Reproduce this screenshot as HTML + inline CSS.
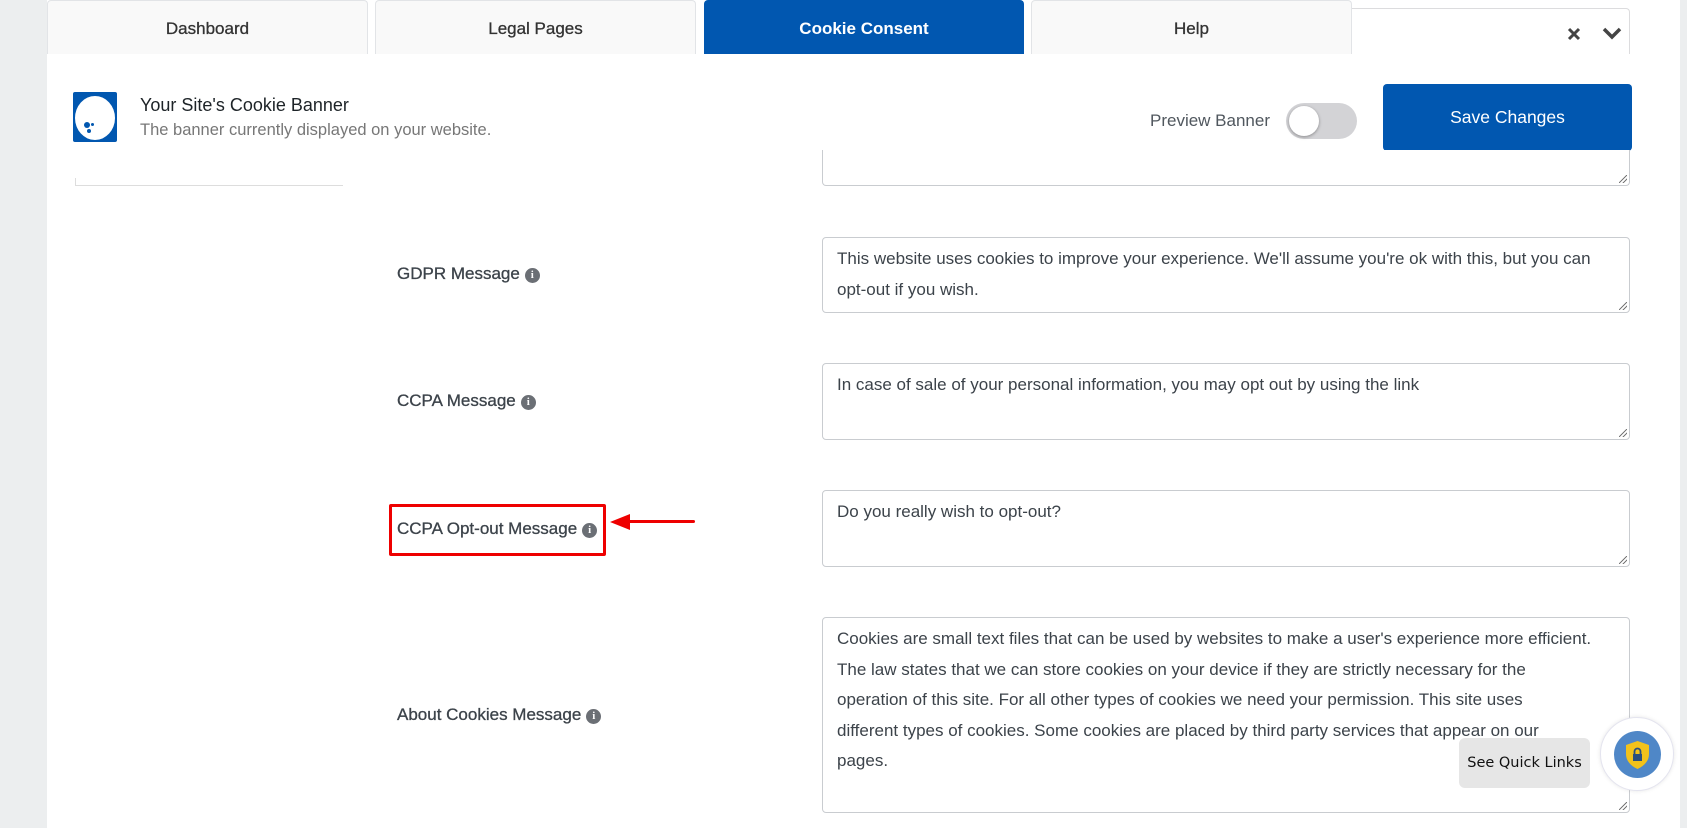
<!DOCTYPE html>
<html><head><meta charset="utf-8"><style>
*{box-sizing:border-box;margin:0;padding:0}
body{width:1687px;height:828px;overflow:hidden;background:#fff;font-family:"Liberation Sans",Arial,sans-serif;position:relative;color:#3c434a}
.abs{position:absolute}
.tab{position:absolute;top:0;height:54px;background:#f9f9f9;border:1px solid #e2e4e7;border-bottom:none;border-radius:4px 4px 0 0;text-align:center;line-height:56px;font-size:17px;color:#333;-webkit-text-stroke:0.3px #333}
.ta{position:absolute;left:822px;width:808px;border:1px solid #c9ccd0;border-radius:4px;background:#fff;padding:6px 14px;font-size:17px;line-height:30.5px;color:#3c434a}
.ta:after{content:"";position:absolute;right:2px;bottom:2px;width:8px;height:8px;background:linear-gradient(135deg,transparent 45%,#777 45%,#777 55%,transparent 55%,transparent 70%,#777 70%,#777 80%,transparent 80%)}
.lbl{position:absolute;left:397px;font-size:17px;color:#3c434a;-webkit-text-stroke:0.3px #3c434a}
.i{display:inline-block;width:15px;height:15px;border-radius:50%;background:#6b6f75;color:#fff;font-size:11px;line-height:15px;text-align:center;font-weight:bold;vertical-align:1px;margin-left:5px;font-family:"Liberation Serif",serif;-webkit-text-stroke:0}
</style></head><body>
<div class="abs" style="left:0;top:0;width:47px;height:828px;background:#eceeef"></div>
<div class="abs" style="left:1680px;top:0;width:7px;height:828px;background:#eceeef"></div>
<div class="abs" style="left:47px;top:54px;width:1633px;height:774px;background:#fff"></div>
<div class="tab" style="left:47px;width:321px">Dashboard</div>
<div class="tab" style="left:375px;width:321px">Legal Pages</div>
<div class="tab" style="left:704px;width:320px;background:#0157b0;border-color:#0157b0;color:#fff;font-weight:bold;-webkit-text-stroke:0">Cookie Consent</div>
<div class="tab" style="left:1031px;width:321px">Help</div>
<div class="abs" style="left:1352px;top:8px;width:278px;height:46px;border:1px solid #dcdcde;border-left:none;border-bottom:none;border-radius:0 4px 0 0"></div>
<svg class="abs" style="left:1566px;top:26px" width="16" height="16" viewBox="0 0 16 16"><path d="M3 3L13 13M13 3L3 13" stroke="#444" stroke-width="3"/></svg>
<svg class="abs" style="left:1601px;top:25px" width="22" height="16" viewBox="0 0 22 16"><path d="M3 4L11 12L19 4" stroke="#444" stroke-width="3.5" fill="none"/></svg>

<div class="abs" style="left:73px;top:92px;width:44px;height:50px;background:#0157b0;border-radius:2px"></div>
<div class="abs" style="left:75px;top:96px;width:40px;height:44px;background:#fff;border-radius:50%"></div>
<div class="abs" style="left:84px;top:122px;width:6px;height:6px;background:#0157b0;border-radius:50%"></div>
<div class="abs" style="left:91px;top:123px;width:3px;height:3px;background:#0157b0;border-radius:50%"></div>
<div class="abs" style="left:87px;top:129px;width:4px;height:4px;background:#0157b0;border-radius:50%"></div>
<div class="abs" style="left:140px;top:95px;font-size:18px;color:#1d2327">Your Site's Cookie Banner</div>
<div class="abs" style="left:140px;top:121px;font-size:16.5px;color:#777">The banner currently displayed on your website.</div>
<div class="abs" style="left:1150px;top:111px;font-size:17px;color:#50575e">Preview Banner</div>
<div class="abs" style="left:1286px;top:103px;width:71px;height:36px;background:#d3d3d6;border-radius:18px"></div>
<div class="abs" style="left:1289px;top:106px;width:30px;height:30px;background:#fff;border-radius:50%;box-shadow:0 1px 3px rgba(0,0,0,.35)"></div>
<div class="abs" style="left:1383px;top:84px;width:249px;height:67px;background:#0157b0;border-radius:4px;color:#fff;font-size:17.5px;text-align:center;line-height:67px">Save Changes</div>
<div class="abs" style="left:75px;top:178px;width:268px;height:8px;border-left:1px solid #ddd;border-bottom:1px solid #ddd"></div>

<div class="ta" style="top:150px;height:36px;border-top:none;border-radius:0 0 4px 4px"></div>

<div class="lbl" style="top:264px">GDPR Message<span class="i">i</span></div>
<div class="ta" style="top:237px;height:76px">This website uses cookies to improve your experience. We'll assume you're ok with this, but you can<br>opt-out if you wish.</div>

<div class="lbl" style="top:391px">CCPA Message<span class="i">i</span></div>
<div class="ta" style="top:363px;height:77px">In case of sale of your personal information, you may opt out by using the link</div>

<div class="lbl" style="top:519px">CCPA Opt-out Message<span class="i">i</span></div>
<div class="abs" style="left:389px;top:504px;width:217px;height:52px;border:3px solid #ee0000;border-radius:2px"></div>
<div class="abs" style="left:625px;top:520px;width:70px;height:3px;background:#ee0000;border-radius:2px"></div>
<svg class="abs" style="left:610px;top:513px" width="20" height="18"><path d="M0 9L20 1L20 17Z" fill="#ee0000"/></svg>
<div class="ta" style="top:490px;height:77px">Do you really wish to opt-out?</div>

<div class="lbl" style="top:705px">About Cookies Message<span class="i">i</span></div>
<div class="ta" style="top:617px;height:196px">Cookies are small text files that can be used by websites to make a user's experience more efficient.<br>The law states that we can store cookies on your device if they are strictly necessary for the<br>operation of this site. For all other types of cookies we need your permission. This site uses<br>different types of cookies. Some cookies are placed by third party services that appear on our<br>pages.</div>

<div class="abs" style="left:1459px;top:738px;width:131px;height:50px;background:#e6e6e6;border-radius:6px;font-family:'DejaVu Sans',sans-serif;font-size:14.5px;color:#111;text-align:center;line-height:50px">See Quick Links</div>
<div class="abs" style="left:1600px;top:717px;width:74px;height:74px;border-radius:50%;background:#fff;border:1px solid #e4e4ef;box-shadow:0 0 4px rgba(0,0,0,.1)"></div>
<div class="abs" style="left:1614px;top:731px;width:47px;height:47px;border-radius:50%;background:#4f87c7"></div>
<svg class="abs" style="left:1624px;top:740px" width="27" height="30" viewBox="0 0 27 30"><path d="M13.5 1L25 5V14C25 21 20 26 13.5 29C7 26 2 21 2 14V5Z" fill="#f2c21b"/><rect x="9" y="14" width="9" height="7" fill="#2b4f7e"/><path d="M10.5 14V11.5A3 3 0 0 1 16.5 11.5V14" stroke="#2b4f7e" stroke-width="1.8" fill="none"/></svg>
</body></html>
